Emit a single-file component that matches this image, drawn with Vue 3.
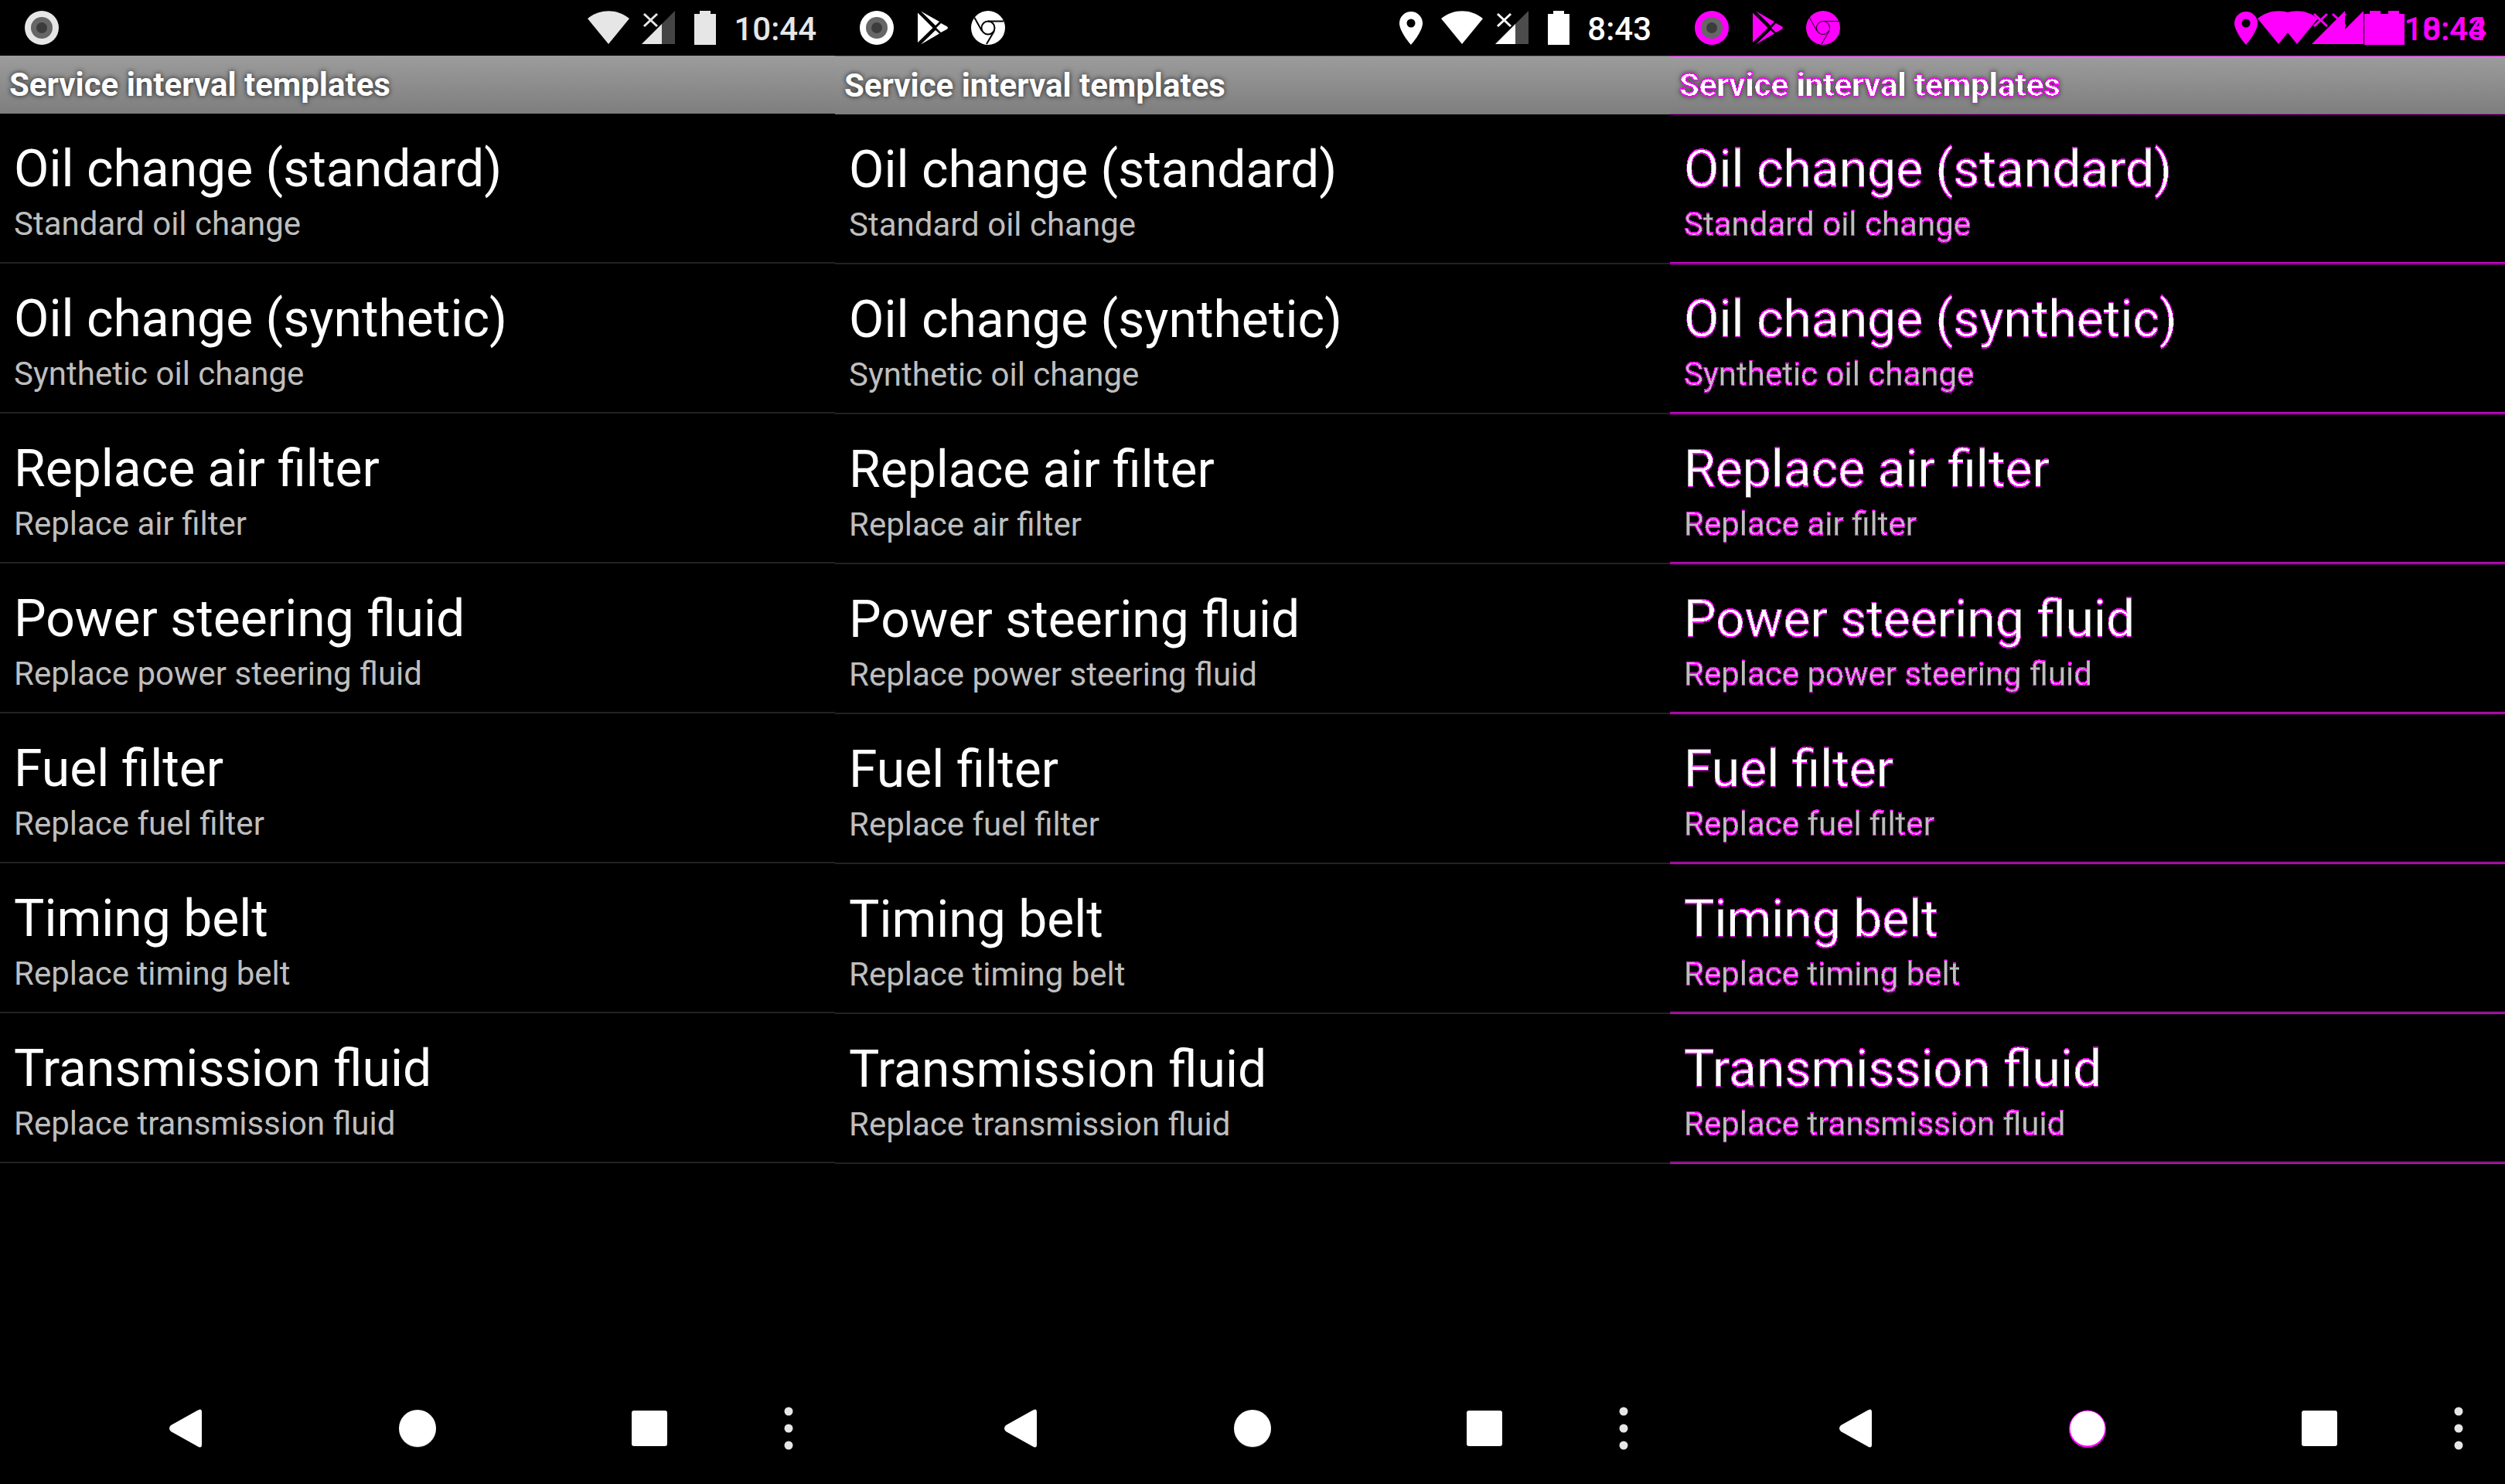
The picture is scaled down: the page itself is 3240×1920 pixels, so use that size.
<script setup>
const templates = [
  ['Oil change (standard)', 'Standard oil change'],
  ['Oil change (synthetic)', 'Synthetic oil change'],
  ['Replace air filter', 'Replace air filter'],
  ['Power steering fluid', 'Replace power steering fluid'],
  ['Fuel filter', 'Replace fuel filter'],
  ['Timing belt', 'Replace timing belt'],
  ['Transmission fluid', 'Replace transmission fluid'],
]

const screens = [
  { kind: 'before', apps: false, layers: [{ time: '10:44', pin: false }] },
  { kind: 'after', apps: true, layers: [{ time: '8:43', pin: true }] },
  { kind: 'diff', apps: true, layers: [{ time: '10:44', pin: false }, { time: '8:43', pin: true }] },
]
</script>

<template>
  <main class="compare">
    <svg class="defs" width="0" height="0" aria-hidden="true">
      <!-- Paints every pixel that changes under a one pixel vertical shift in magenta. -->
      <filter id="edge-diff" x="-5%" y="-10%" width="110%" height="120%" color-interpolation-filters="sRGB">
        <feOffset in="SourceGraphic" dy="1" result="moved" />
        <feComposite in="SourceAlpha" in2="moved" operator="arithmetic" k1="0" k2="1" k3="-1" k4="0" result="lost" />
        <feComposite in="moved" in2="SourceAlpha" operator="arithmetic" k1="0" k2="1" k3="-1" k4="0" result="gained" />
        <feMerge result="changed">
          <feMergeNode in="lost" />
          <feMergeNode in="gained" />
        </feMerge>
        <feColorMatrix in="changed" type="matrix" values="0 0 0 0 1  0 0 0 0 0  0 0 0 0 1  0 0 0 40 -2" result="marks" />
        <feMerge>
          <feMergeNode in="moved" />
          <feMergeNode in="marks" />
        </feMerge>
      </filter>
    </svg>

    <section v-for="screen in screens" :key="screen.kind" class="screen" :class="screen.kind">
      <div class="status">
        <div class="notices">
          <svg class="glyph" viewBox="0 0 44 44">
            <circle class="ink" cx="22" cy="22" r="22" />
            <circle cx="22" cy="22" r="14" fill="#666" />
            <circle cx="22" cy="22" r="7" fill="#3c3c3c" />
          </svg>
          <template v-if="screen.apps">
            <svg class="glyph" viewBox="0 0 44 44">
              <path class="ink" d="M3 2.500 22.500 22 3 41ZM7 .500 31 14 26 19ZM7 43.500 31 29.500 26 25ZM33 16 40.500 20Q43.500 22 40.500 24L33 28 27 22Z" />
            </svg>
            <svg class="glyph" viewBox="0 0 44 44">
              <circle class="ink" cx="22" cy="22" r="22" />
              <g class="seam">
                <circle cx="22" cy="22" r="8.500" />
                <path d="M22 13.500H42M14 26 4.500 9M30 26 20 43" />
              </g>
            </svg>
          </template>
        </div>
        <div class="system">
          <div v-for="layer in screen.layers" :key="layer.time" class="layer">
            <svg v-if="layer.pin" class="pin" viewBox="0 0 30 44">
              <path class="ink" fill-rule="evenodd" d="M15 1A15 15 0 0 0 0 16C0 27 15 44 15 44S30 27 30 16A15 15 0 0 0 15 1ZM15 10.500A5.500 5.500 0 1 1 15 21.500A5.500 5.500 0 1 1 15 10.500Z" />
            </svg>
            <svg class="wifi" viewBox="0 0 54 44">
              <path class="ink" d="M0 10C16-3 38-3 54 10L27 43Z" />
            </svg>
            <svg class="signal" viewBox="0 0 44 44">
              <path class="faint" d="M43 0V43H26V17Z" />
              <path class="ink" d="M0 43 26 17V43Z" />
              <path class="cross" d="M3 4 20 20M20 4 3 20" />
            </svg>
            <svg class="battery" viewBox="0 0 28 44">
              <path class="ink" d="M7 0H21V4H28V44H0V4H7Z" />
            </svg>
            <time>{{ layer.time }}</time>
          </div>
        </div>
      </div>

      <header class="bar"><h1>Service interval templates</h1></header>

      <ul class="list">
        <li v-for="[name, detail] in templates" :key="name">
          <span class="name">{{ name }}</span>
          <span class="detail">{{ detail }}</span>
        </li>
      </ul>

      <nav class="keys">
        <button type="button" aria-label="Back">
          <svg viewBox="0 0 48 50">
            <path d="M5 21 39 2Q45-2 45 4V46Q45 52 39 48L5 29Q1 25 5 21Z" fill="#fff" />
          </svg>
        </button>
        <button type="button" aria-label="Home">
          <svg viewBox="0 0 48 50">
            <ellipse class="rim" cx="24" cy="26" rx="24" ry="24" />
            <circle class="dot" cx="24" cy="25" r="24" />
          </svg>
        </button>
        <button type="button" aria-label="Recent apps">
          <svg viewBox="0 0 48 50"><rect x="1" y="2" width="46" height="46" rx="3" fill="#fff" /></svg>
        </button>
        <button type="button" class="more" aria-label="More options">
          <svg viewBox="0 0 12 56">
            <g fill="#e6e6e6">
              <circle cx="6" cy="6" r="5.500" />
              <circle cx="6" cy="28" r="5.500" />
              <circle cx="6" cy="50" r="5.500" />
            </g>
          </svg>
        </button>
      </nav>
    </section>
  </main>
</template>

<style>
body {
  margin: 0;
  background: #000;
}
</style>

<style scoped>
.compare {
  display: grid;
  grid-template-columns: repeat(3, 1fr);
  min-height: 100vh;
  background: #000;
  color: #fff;
  font-family: Roboto, sans-serif;
}

.defs {
  position: absolute;
}

.screen {
  --ink: #fff;
  --faint: #4c4c4c;
  display: flex;
  flex-direction: column;
  min-width: 0;
}

.before {
  --ink: #e6e6e6;
  --faint: #444;
}

.diff {
  --ink: #f0f;
  --faint: #f0f;
}

.ink {
  fill: var(--ink);
}

.faint {
  fill: var(--faint);
}

.cross {
  fill: none;
  stroke: var(--ink);
  stroke-width: 3;
}

.seam {
  fill: none;
  stroke: #000;
  stroke-width: 2;
}

.diff .seam {
  stroke-width: 1;
}

.status {
  display: flex;
  justify-content: space-between;
  height: 72px;
  padding: 0 24px 0 32px;
}

.notices,
.layer {
  display: flex;
  align-items: center;
}

.notices {
  gap: 28px;
}

.glyph {
  width: 44px;
  height: 44px;
}

.system {
  display: grid;
}

.layer {
  grid-area: 1 / 1;
  justify-content: flex-end;
}

.layer svg {
  height: 44px;
}

.pin {
  width: 30px;
  margin-right: 24px;
}

.wifi {
  width: 54px;
  margin-right: 16px;
}

.signal {
  width: 44px;
  margin-right: 24px;
}

.battery {
  width: 28px;
  margin-right: 23px;
}

time {
  padding-top: 4px;
  color: var(--ink);
  font-size: 42px;
  font-weight: 500;
  line-height: 68px;
}

.bar {
  padding: 0 12px;
  background: linear-gradient(#9c9c9c, #7e7e7e);
}

.after .bar {
  border-top: 1px solid #707070;
}

.diff .bar {
  border: solid #f0f;
  border-width: 1px 0;
}

h1 {
  margin: 0;
  font-size: 42px;
  font-weight: 700;
  line-height: 75px;
  text-shadow: 0 0 6px #000c;
}

.diff h1 {
  line-height: 74px;
  text-shadow: none;
  filter: url(#edge-diff) drop-shadow(0 0 3px #0009);
}

.list {
  flex: 1;
  margin: 0;
  padding: 0;
  list-style: none;
}

li {
  display: flex;
  flex-direction: column;
  box-sizing: border-box;
  height: 194px;
  padding: 32px 18px 0;
  border-bottom: 2px solid #222;
}

.name {
  font-size: 66px;
  line-height: 80px;
}

.detail {
  padding-top: 6px;
  color: #bebebe;
  font-size: 42px;
  line-height: 50px;
}

.diff li {
  padding-top: 31px;
  border: 0;
  background: linear-gradient(#f0f 1px, #222 1px 2px, #f0f 2px) bottom / 100% 3px no-repeat;
}

.diff .name,
.diff .detail {
  filter: url(#edge-diff);
}

.keys {
  display: flex;
  height: 144px;
  padding: 0 30px 0 90px;
}

button {
  display: flex;
  flex: 1;
  align-items: center;
  justify-content: center;
  padding: 0;
  border: 0;
  background: none;
}

button svg {
  width: 48px;
  height: 50px;
}

.more {
  flex: 0 0 60px;
}

.more svg {
  width: 12px;
  height: 56px;
}

.rim {
  fill: #333;
}

.dot {
  fill: #fff;
}

.diff .rim {
  fill: #f0f;
}

.diff .dot {
  stroke: #f0f;
  r: 23px;
}
</style>
